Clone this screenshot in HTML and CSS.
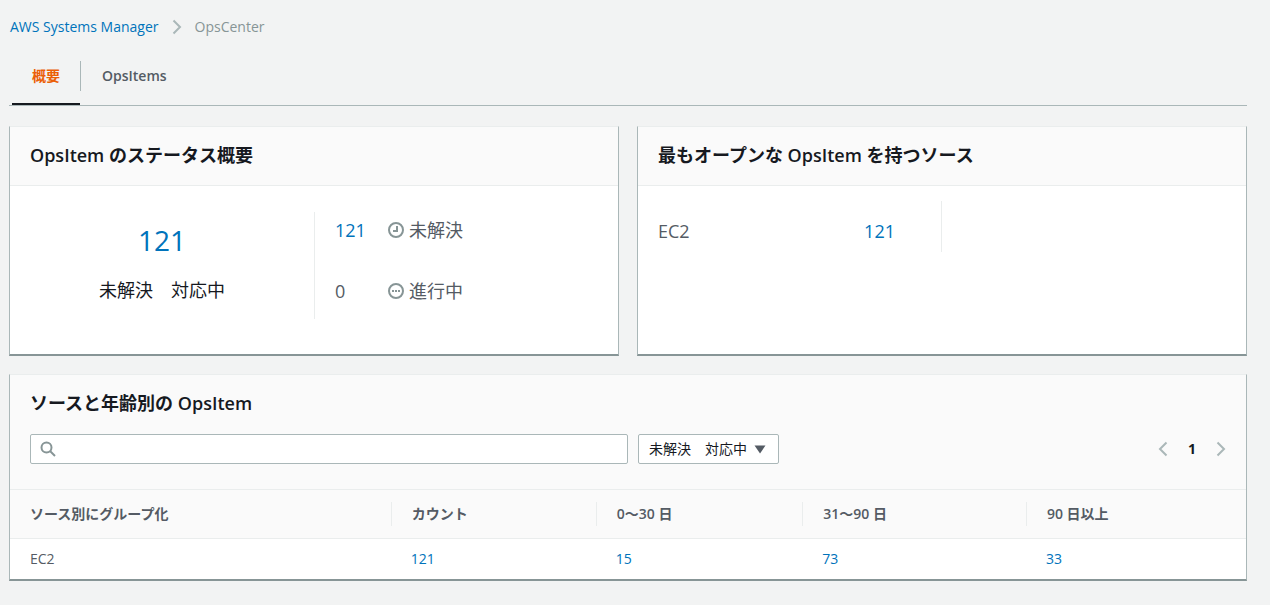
FILE: index.html
```html
<!DOCTYPE html>
<html lang="ja">
<head>
  <meta charset="UTF-8">
  <meta name="viewport" content="width=device-width, initial-scale=1">
  <title>OpsCenter</title>
  <link rel="stylesheet" href="styles.css">
</head>
<body>
  <nav class="breadcrumb">
    <a href="#">AWS Systems Manager</a>
    <svg class="chevron" viewBox="0 0 10 16"><path d="M1.500 1.500L8 8l-6.500 6.500"/></svg>
    <span>OpsCenter</span>
  </nav>

  <nav class="tabs">
    <a class="tab active" href="#">概要</a>
    <a class="tab" href="#">OpsItems</a>
  </nav>

  <main>
    <div class="cards">
      <section class="panel">
        <h2 class="panel-header">OpsItem のステータス概要</h2>
        <div class="status">
          <div class="status-total">
            <a class="total" href="#">121</a>
            <span>未解決　対応中</span>
          </div>
          <div class="status-list">
            <div class="status-row">
              <a href="#">121</a>
              <svg class="status-icon" viewBox="0 0 16 16"><circle cx="8" cy="8" r="7"/><path d="M9 4v5H5"/></svg>
              <span>未解決</span>
            </div>
            <div class="status-row">
              <span>0</span>
              <svg class="status-icon" viewBox="0 0 16 16"><circle cx="8" cy="8" r="7"/><path d="M4 8h2M7 8h2M10 8h2"/></svg>
              <span>進行中</span>
            </div>
          </div>
        </div>
      </section>

      <section class="panel">
        <h2 class="panel-header">最もオープンな OpsItem を持つソース</h2>
        <div class="sources">
          <div class="source">
            <span>EC2</span>
            <a href="#">121</a>
          </div>
        </div>
      </section>
    </div>

    <section class="panel">
      <div class="toolbar">
        <h2>ソースと年齢別の OpsItem</h2>
        <div class="filters">
          <div class="search">
            <svg viewBox="0 0 16 16"><circle cx="6.500" cy="6.500" r="5"/><path d="M10 10l5 5"/></svg>
            <input type="search" aria-label="検索">
          </div>
          <div class="select">
            <select aria-label="ステータス">
              <option>未解決　対応中</option>
            </select>
            <svg viewBox="0 0 12 9"><path d="M0.500 0.500h11L6 8.500z"/></svg>
          </div>
          <div class="pagination">
            <button type="button" aria-label="前へ"><svg class="chevron" viewBox="0 0 10 16"><path d="M8.500 1.500L2 8l6.500 6.500"/></svg></button>
            <span>1</span>
            <button type="button" aria-label="次へ"><svg class="chevron" viewBox="0 0 10 16"><path d="M1.500 1.500L8 8l-6.500 6.500"/></svg></button>
          </div>
        </div>
      </div>
      <table>
        <colgroup>
          <col class="col-source">
          <col class="col-count">
          <col class="col-month">
          <col class="col-quarter">
          <col>
        </colgroup>
        <thead>
          <tr>
            <th><div>ソース別にグループ化</div></th>
            <th><div>カウント</div></th>
            <th><div>0～30 日</div></th>
            <th><div>31～90 日</div></th>
            <th><div>90 日以上</div></th>
          </tr>
        </thead>
        <tbody>
          <tr>
            <td>EC2</td>
            <td><a href="#">121</a></td>
            <td><a href="#">15</a></td>
            <td><a href="#">73</a></td>
            <td><a href="#">33</a></td>
          </tr>
        </tbody>
      </table>
    </section>
  </main>
</body>
</html>
```
FILE: styles.css
```css
* {
  box-sizing: border-box;
}

body {
  margin: 0;
  padding: 16px 23px 24px 9px;
  background: #f2f3f3;
  color: #545b64;
  font-family: "Open Sans", "Noto Sans CJK JP", sans-serif;
  font-size: 14px;
  line-height: 22px;
}

a {
  color: #0073bb;
  text-decoration: none;
}

h2 {
  margin: 0;
  color: #16191f;
  font-size: 18px;
  font-weight: 600;
  line-height: 22px;
}

svg {
  display: block;
  flex: none;
}

.chevron {
  width: 10px;
  height: 16px;
  fill: none;
  stroke: #aab7b8;
  stroke-width: 2;
}

/* Navigation */
.breadcrumb {
  display: flex;
  align-items: center;
  gap: 13px;
  padding-left: 1px;
  color: #879596;
}

.tabs {
  display: flex;
  margin-top: 8px;
  padding-left: 3px;
  border-bottom: 1px solid #aab7b8;
}

.tab {
  position: relative;
  padding: 19px 20px 16px;
  border-bottom: 2px solid transparent;
  color: #545b64;
  font-weight: 600;
}

.tab + .tab {
  margin-left: 2px;
}

.tab.active {
  border-color: #16191f;
  color: #eb5f07;
}

.tab.active::after {
  content: "";
  position: absolute;
  top: 15px;
  right: -1px;
  width: 1px;
  height: 30px;
  background: #aab7b8;
}

/* Panels */
.cards {
  display: grid;
  grid-template-columns: 1fr 1fr;
  gap: 18px;
  margin: 20px 0 18px;
}

.panel {
  background: #fff;
  border: 1px solid #aab7b8;
  border-top-color: #eaeded;
  border-bottom: 2px solid #879596;
}

.panel-header {
  padding: 17px 20px 19px;
  background: #fafafa;
  border-bottom: 1px solid #eaeded;
}

.status {
  display: grid;
  grid-template-columns: 1fr 1fr;
  padding: 26px 0 35px;
  font-size: 18px;
}

.status-total {
  display: flex;
  flex-direction: column;
  align-items: center;
  gap: 23px;
  padding-top: 12px;
  color: #16191f;
}

.total {
  font-size: 28px;
  line-height: 32px;
}

.status-list {
  display: grid;
  align-content: start;
  gap: 39px;
  padding: 7px 20px 17px;
  border-left: 1px solid #eaeded;
}

.status-row {
  display: grid;
  grid-template-columns: 53px 16px 1fr;
  align-items: center;
}

.status-row span:last-child {
  padding-left: 5px;
}

.status-icon {
  width: 16px;
  height: 16px;
  fill: none;
  stroke: #879596;
  stroke-width: 2;
}

.sources {
  display: grid;
  grid-template-columns: 1fr 1fr;
  padding: 15px 0;
  font-size: 18px;
}

.source {
  display: flex;
  justify-content: space-between;
  padding: 19px 46px 10px 20px;
  border-right: 1px solid #eaeded;
}

/* Table */
.toolbar {
  padding: 17px 20px 25px;
  background: #fafafa;
}

.filters {
  display: flex;
  align-items: center;
  gap: 10px;
  margin-top: 20px;
}

.search {
  position: relative;
  width: 50%;
}

.search svg {
  position: absolute;
  top: 7px;
  left: 10px;
  width: 16px;
  height: 16px;
  fill: none;
  stroke: #879596;
  stroke-width: 2;
}

.search input,
.select select {
  display: block;
  width: 100%;
  height: 30px;
  background: #fff;
  border: 1px solid #aab7b8;
  border-radius: 2px;
  font: inherit;
  appearance: none;
}

.search input {
  padding: 0 10px 0 34px;
}

.select {
  position: relative;
}

.select select {
  padding: 0 31px 0 10px;
  color: #16191f;
}

.select svg {
  position: absolute;
  top: 11px;
  right: 13px;
  width: 12px;
  height: 9px;
  fill: #545b64;
  pointer-events: none;
}

.pagination {
  display: flex;
  align-items: center;
  gap: 20px;
  margin-left: auto;
  color: #16191f;
  font-weight: 700;
}

.pagination button {
  padding: 0;
  border: 0;
  background: none;
}

table {
  width: 100%;
  table-layout: fixed;
  border-collapse: collapse;
}

.col-source {
  width: 30.8%;
}

.col-count {
  width: 16.6%;
}

.col-month {
  width: 16.7%;
}

.col-quarter {
  width: 18.1%;
}

th {
  padding: 12px 0;
  background: #fafafa;
  border: solid #eaeded;
  border-width: 1px 0;
  font-weight: 600;
  text-align: left;
}

th div {
  padding: 1px 20px;
}

th + th div {
  border-left: 1px solid #eaeded;
}

td {
  padding: 9px 20px;
}
```
